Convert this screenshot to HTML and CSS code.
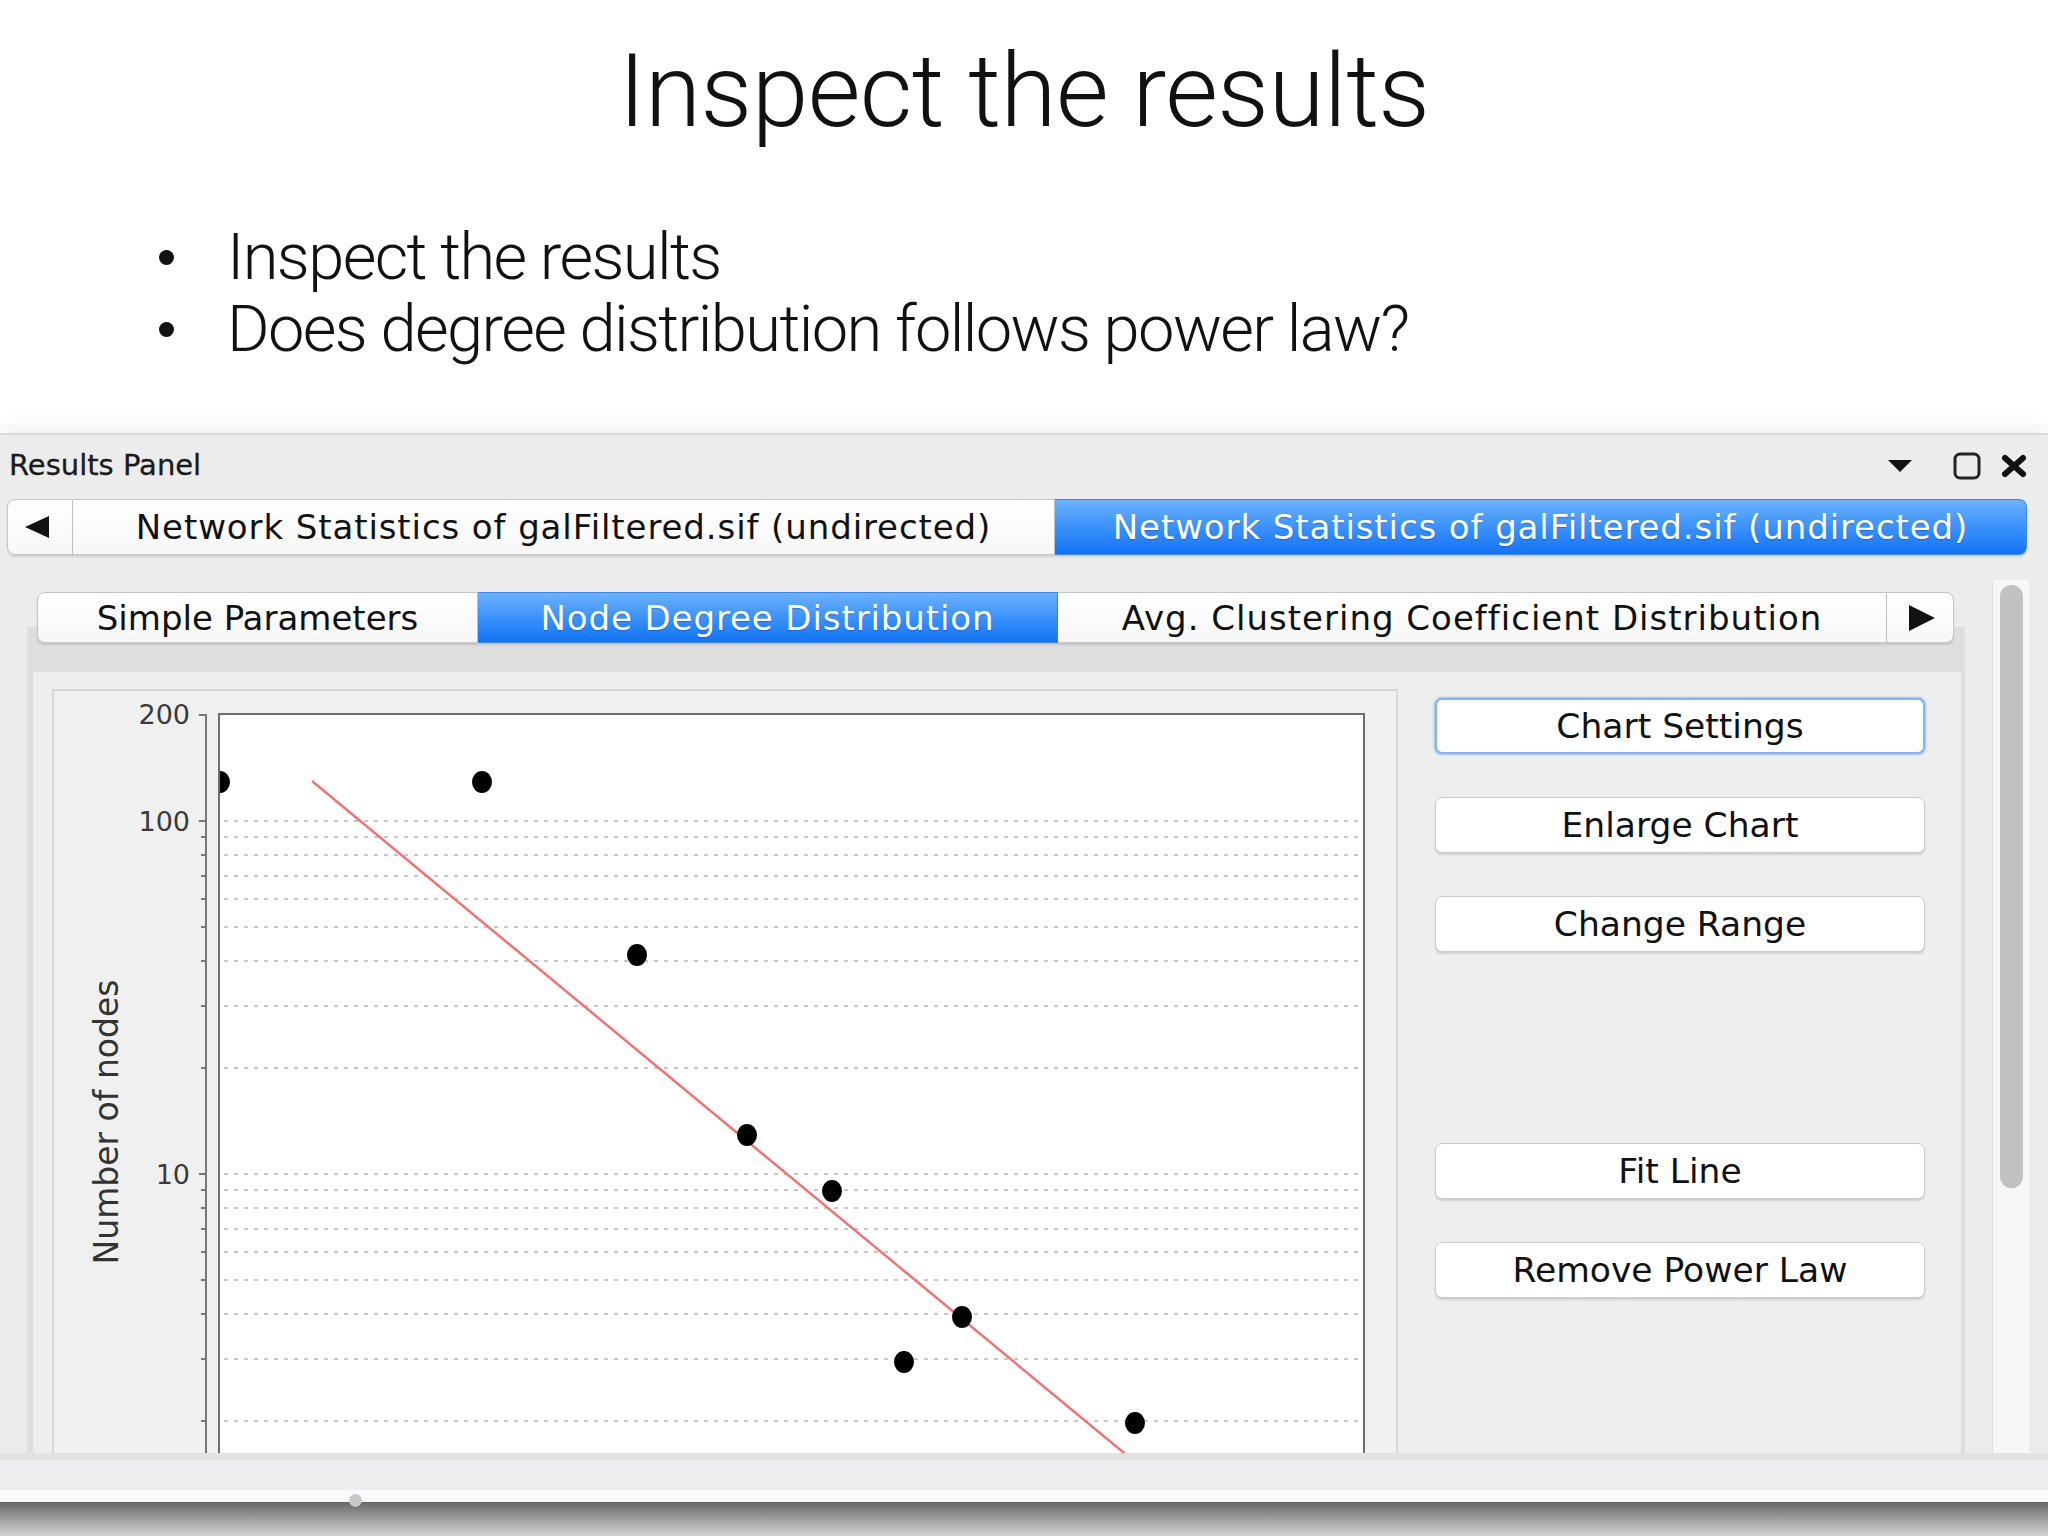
FILE: index.html
```html
<!DOCTYPE html>
<html>
<head>
  <title>Inspect the results</title>
  <link rel="stylesheet" href="styles.css">
</head>
<body>

<div class="slide">
  <h1 class="title">Inspect the results</h1>
  <ul class="bullets">
    <li>Inspect the results</li>
    <li>Does degree distribution follows power law?</li>
  </ul>
</div>

<div class="panel">
  <div class="panel-head">
    <span class="panel-name">Results Panel</span>
    <div class="head-icons">
      <svg class="ic-menu" width="24" height="12" viewBox="0 0 24 12"><path d="M0 0 H24 L12 12 Z" fill="#111"/></svg>
      <svg class="ic-max" width="28" height="28" viewBox="0 0 28 28"><rect x="2" y="2" width="24" height="24" rx="5" fill="none" stroke="#222" stroke-width="3"/></svg>
      <svg class="ic-close" width="26" height="24" viewBox="0 0 26 24"><path d="M4 4 L22 20 M22 4 L4 20" stroke="#111" stroke-width="6" stroke-linecap="round"/></svg>
    </div>
  </div>

  <div class="outer-tabs">
    <div class="tab arrow-left">
      <svg width="24" height="22" viewBox="0 0 24 22"><path d="M24 0 V22 L0 11 Z" fill="#111"/></svg>
    </div>
    <div class="tab outer-one">Network Statistics of galFiltered.sif (undirected)</div>
    <div class="tab outer-two selected">Network Statistics of galFiltered.sif (undirected)</div>
  </div>

  <div class="panel-body">
    <div class="main">
      <div class="tab-pane">
        <div class="inner-tabs">
          <div class="tab t-simple">Simple Parameters</div>
          <div class="tab t-degree selected">Node Degree Distribution</div>
          <div class="tab t-clust">Avg. Clustering Coefficient Distribution</div>
          <div class="tab arrow-right">
            <svg width="26" height="26" viewBox="0 0 26 26"><path d="M0 0 L26 13 L0 26 Z" fill="#111"/></svg>
          </div>
        </div>

        <div class="inner-panel">
          <div class="chart-box">
            <svg class="chart" viewBox="52 689 1346 764" preserveAspectRatio="none">
              <defs>
                <clipPath id="plotclip"><rect x="220" y="715" width="1144" height="760"/></clipPath>
              </defs>
              <rect x="53" y="690" width="1344" height="800" fill="#f0f0f0" stroke="#d7d7d7" stroke-width="2"/>
              <rect x="219" y="714" width="1145" height="800" fill="#fff" stroke="#6e6e6e" stroke-width="2"/>

              <g stroke="#c6c6c6" stroke-width="2" stroke-dasharray="4 6">
                <line x1="224" x2="1362" y1="821" y2="821"/>
                <line x1="224" x2="1362" y1="837" y2="837"/>
                <line x1="224" x2="1362" y1="855" y2="855"/>
                <line x1="224" x2="1362" y1="876" y2="876"/>
                <line x1="224" x2="1362" y1="899" y2="899"/>
                <line x1="224" x2="1362" y1="927" y2="927"/>
                <line x1="224" x2="1362" y1="961" y2="961"/>
                <line x1="224" x2="1362" y1="1006" y2="1006"/>
                <line x1="224" x2="1362" y1="1068" y2="1068"/>
                <line x1="224" x2="1362" y1="1174" y2="1174"/>
                <line x1="224" x2="1362" y1="1190" y2="1190"/>
                <line x1="224" x2="1362" y1="1208" y2="1208"/>
                <line x1="224" x2="1362" y1="1229" y2="1229"/>
                <line x1="224" x2="1362" y1="1252" y2="1252"/>
                <line x1="224" x2="1362" y1="1280" y2="1280"/>
                <line x1="224" x2="1362" y1="1314" y2="1314"/>
                <line x1="224" x2="1362" y1="1359" y2="1359"/>
                <line x1="224" x2="1362" y1="1421" y2="1421"/>
              </g>

              <g stroke="#777" stroke-width="2">
                <line x1="206" x2="206" y1="714" y2="1460"/>
                <line x1="199" x2="207" y1="715" y2="715"/>
                <line x1="199" x2="207" y1="821" y2="821"/>
                <line x1="199" x2="207" y1="1174" y2="1174"/>
                <line x1="201" x2="207" y1="837" y2="837"/>
                <line x1="201" x2="207" y1="855" y2="855"/>
                <line x1="201" x2="207" y1="876" y2="876"/>
                <line x1="201" x2="207" y1="899" y2="899"/>
                <line x1="201" x2="207" y1="927" y2="927"/>
                <line x1="201" x2="207" y1="961" y2="961"/>
                <line x1="201" x2="207" y1="1006" y2="1006"/>
                <line x1="201" x2="207" y1="1068" y2="1068"/>
                <line x1="201" x2="207" y1="1190" y2="1190"/>
                <line x1="201" x2="207" y1="1208" y2="1208"/>
                <line x1="201" x2="207" y1="1229" y2="1229"/>
                <line x1="201" x2="207" y1="1252" y2="1252"/>
                <line x1="201" x2="207" y1="1280" y2="1280"/>
                <line x1="201" x2="207" y1="1314" y2="1314"/>
                <line x1="201" x2="207" y1="1359" y2="1359"/>
                <line x1="201" x2="207" y1="1421" y2="1421"/>
              </g>

              <g class="ticklabel">
                <text x="190" y="724">200</text>
                <text x="190" y="831">100</text>
                <text x="190" y="1184">10</text>
              </g>
              <text class="axis-title" transform="rotate(-90 107 1122)" x="107" y="1133">Number of nodes</text>

              <g clip-path="url(#plotclip)">
                <line x1="312" y1="781" x2="1135" y2="1462" stroke="#f07373" stroke-width="2.5"/>
                <g fill="#000">
                  <ellipse cx="220" cy="782" rx="10" ry="11"/>
                  <ellipse cx="482" cy="782" rx="10" ry="11"/>
                  <ellipse cx="637" cy="955" rx="10" ry="11"/>
                  <ellipse cx="747" cy="1135" rx="10" ry="11"/>
                  <ellipse cx="832" cy="1191" rx="10" ry="11"/>
                  <ellipse cx="962" cy="1317" rx="10" ry="11"/>
                  <ellipse cx="904" cy="1362" rx="10" ry="11"/>
                  <ellipse cx="1135" cy="1423" rx="10" ry="11"/>
                </g>
              </g>
            </svg>
          </div>

          <div class="buttons">
            <button class="btn focused">Chart Settings</button>
            <button class="btn">Enlarge Chart</button>
            <button class="btn">Change Range</button>
            <button class="btn fit">Fit Line</button>
            <button class="btn">Remove Power Law</button>
          </div>
        </div>
      </div>
    </div>
    <div class="scroll-track"><div class="scroll-thumb"></div></div>
    <div class="edge"></div>
  </div>

  <div class="panel-foot">
    <div class="foot-band"></div>
    <div class="foot-light"></div>
    <div class="foot-white"><span class="knob"></span></div>
  </div>
</div>

<div class="under-shadow"></div>

</body>
</html>
```

FILE: styles.css
```css
* {
  box-sizing: border-box;
}

body {
  margin: 0;
  padding: 0;
  width: 2048px;
  height: 1536px;
  overflow: hidden;
  background: #fff;
  font-family: "DejaVu Sans", "Liberation Sans", sans-serif;
  color: #111;
}

/* slide text */

.slide {
  font-family: Roboto, "Liberation Sans", sans-serif;
  font-weight: 300;
  color: #111;
}

.title {
  margin: 40px 0 0 0;
  font-size: 102px;
  line-height: 103px;
  font-weight: 300;
  letter-spacing: -0.6px;
  text-align: center;
  height: 103px;
}

.bullets {
  list-style: none;
  margin: 78px 0 0 158px;
  padding: 0;
  font-size: 65px;
  line-height: 72px;
  letter-spacing: -1.6px;
}

.bullets li {
  display: flex;
}

.bullets li::before {
  content: "";
  width: 15px;
  height: 15px;
  margin: 29px 53px 0 1px;
  border-radius: 50%;
  background: #111;
  flex: none;
}

/* results panel */

.panel {
  margin-top: 68px;
  height: 1069px;
  background: #ececec;
  border-top: 2px solid #dadada;
  box-shadow: 0 -8px 16px rgba(0,0,0,0.05);
  display: flex;
  flex-direction: column;
}

.panel-head {
  height: 64px;
  display: flex;
  align-items: center;
  padding: 0 21px 0 9px;
}

.panel-name {
  font-size: 29px;
  color: #1a1a1a;
  margin-top: -4px;
  -webkit-text-stroke: 0.3px #1a1a1a;
}

.head-icons {
  margin-left: auto;
  display: flex;
  align-items: center;
  margin-top: -2px;
}

.ic-max {
  margin-left: 41px;
}

.ic-close {
  margin-left: 20px;
}

/* tabs */

.tab {
  display: flex;
  align-items: center;
  justify-content: center;
  background: linear-gradient(#ffffff, #f7f7f7);
  border: 1px solid #c6c6c6;
  border-left: none;
  color: #111;
  white-space: nowrap;
  box-shadow: 0 2px 2px rgba(0,0,0,0.12);
}

.tab:first-child {
  border-left: 1px solid #c6c6c6;
  border-radius: 8px 0 0 8px;
}

.tab:last-child {
  border-radius: 0 8px 8px 0;
}

.tab.selected {
  background: linear-gradient(#6cb2fd, #3b92fa 50%, #1473f3);
  border-color: #3c87e8;
  color: #fff;
  text-shadow: 0 1px 1px rgba(0,40,120,0.35);
}

.outer-tabs {
  display: flex;
  height: 56px;
  margin: 0 21px 0 7px;
  font-size: 34px;
  letter-spacing: 0.9px;
}

.arrow-left {
  width: 66px;
  padding-right: 6px;
}

.outer-one {
  width: 982px;
}

.outer-two {
  flex: 1;
}

.panel-body {
  margin-top: 25px;
  height: 873px;
  display: flex;
  overflow: hidden;
}

.main {
  flex: 1;
  padding: 12px 27px 0 27px;
}

.tab-pane {
  height: 100%;
  background: linear-gradient(transparent 35px, #dedede 35px);
  border-radius: 6px 6px 0 0;
  display: flex;
  flex-direction: column;
}

.inner-tabs {
  display: flex;
  height: 51px;
  margin: 0 11px 0 10px;
  font-size: 34px;
  flex: none;
}

.t-simple {
  width: 441px;
}

.t-degree {
  width: 580px;
  letter-spacing: 0.9px;
}

.t-clust {
  width: 829px;
  letter-spacing: 1px;
}

.arrow-right {
  flex: 1;
  padding-left: 4px;
}

.inner-panel {
  flex: 1;
  margin: 29px 4px 0 6px;
  background: #eeeeee;
  display: flex;
  align-items: flex-start;
}

.chart-box {
  margin: 17px 0 0 19px;
  width: 1346px;
  height: 764px;
  flex: none;
}

.chart {
  display: block;
  width: 1346px;
  height: 764px;
}

.ticklabel text {
  font-family: "DejaVu Sans", sans-serif;
  font-size: 27px;
  fill: #3a3a3a;
  text-anchor: end;
}

.axis-title {
  font-family: "DejaVu Sans", sans-serif;
  font-size: 33px;
  fill: #333;
  text-anchor: middle;
}

/* right hand buttons */

.buttons {
  margin: 26px 0 0 37px;
  width: 490px;
  display: flex;
  flex-direction: column;
}

.btn {
  height: 56px;
  margin-top: 43px;
  background: #fff;
  border: 1px solid #cacaca;
  border-radius: 7px;
  box-shadow: 0 2px 2px rgba(0,0,0,0.13);
  font-family: "DejaVu Sans", "Liberation Sans", sans-serif;
  font-size: 34.5px;
  color: #111;
  padding: 0;
}

.btn:first-child {
  margin-top: 0;
}

.btn.focused {
  border: 2px solid #84b4f0;
  box-shadow: 0 0 2px 1px rgba(110,160,235,0.6);
}

.btn.fit {
  margin-top: 191px;
}

/* scrollbar on the right */

.scroll-track {
  width: 37px;
  flex: none;
  background: #f7f7f9;
  border-left: 1px solid #e2e2e2;
  padding: 5px 6px 0 7px;
}

.scroll-thumb {
  height: 603px;
  background: #c2c2c2;
  border-radius: 12px;
}

.edge {
  width: 19px;
  flex: none;
  background: #ececec;
}

/* bottom of the panel */

.panel-foot {
  display: flex;
  flex-direction: column;
}

.foot-band {
  height: 7px;
  background: #e2e2e2;
}

.foot-light {
  height: 30px;
  background: #efeef0;
}

.foot-white {
  height: 12px;
  background: #fbfafc;
  position: relative;
}

.knob {
  position: absolute;
  left: 349px;
  top: 4px;
  width: 13px;
  height: 13px;
  border-radius: 50%;
  background: #c8c8c8;
}

.under-shadow {
  height: 34px;
  background: linear-gradient(#666666, #9a9a9a 45%, #d2d2d2);
}
```
